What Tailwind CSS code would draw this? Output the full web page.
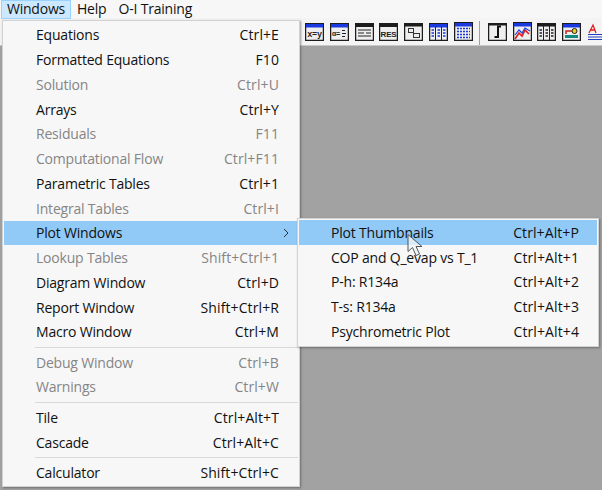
<!DOCTYPE html>
<html lang="en">
<head>
  <meta charset="UTF-8" />
  <title>Windows menu</title>
  <script src="https://cdn.jsdelivr.net/npm/@tailwindcss/browser@4"></script>
</head>
<body class="w-[602px] h-[490px] overflow-hidden relative bg-[#a2a2a2] font-['Open_Sans',sans-serif] text-[14px] tracking-[-0.2px] text-[#111]">

  <!-- Menu bar -->
  <div class="h-[18px] bg-[#f7f7f8] flex items-center">
    <div class="ml-[1px] w-[70px] h-[19px] pb-[2px] bg-[#cce8ff] border border-[#99d1ff] flex items-center justify-center">Windows</div>
    <div class="ml-[6px] pb-[2px]">Help</div>
    <div class="ml-[12px] pb-[2px]">O-I Training</div>
  </div>

  <!-- Toolbar -->
  <div class="h-[28px] bg-[#f4f4f4] border-b border-[#c8c8c8] pl-[305px] pt-[5px] flex gap-[5.800px] items-start">
    <svg class="w-[19px] h-[18px]" viewBox="0 0 19 18"><rect x=".6" y=".6" width="17.800" height="16.800" fill="#eee" stroke="#1c1c1c" stroke-width="1.300"/><rect x="1" y="1" width="17" height="3.500" fill="#1a3ae0"/><text x="9.500" y="13.500" font-size="8.500" font-weight="700" text-anchor="middle" fill="#222" font-family="Liberation Mono">x=y</text></svg>
    <svg class="w-[19px] h-[18px]" viewBox="0 0 19 18"><rect x=".6" y=".6" width="17.800" height="16.800" fill="#eee" stroke="#1c1c1c" stroke-width="1.300"/><rect x="1" y="1" width="17" height="3.500" fill="#1a3ae0"/><text x="6" y="12.500" font-size="7" font-weight="700" text-anchor="middle" fill="#222" font-family="Liberation Mono">α=</text><path d="M12 7.500h3M12 10.500h4M12 13.500h3" stroke="#222" stroke-width="1.200"/></svg>
    <svg class="w-[19px] h-[18px]" viewBox="0 0 19 18"><rect x=".6" y=".6" width="17.800" height="16.800" fill="#eee" stroke="#1c1c1c" stroke-width="1.300"/><rect x="1" y="1" width="17" height="3" fill="#1c1c1c"/><path d="M3 7h13M3 10h6M11 10h5M3 13h13" stroke="#222" stroke-width="1.200"/></svg>
    <svg class="w-[19px] h-[18px]" viewBox="0 0 19 18"><rect x=".6" y=".6" width="17.800" height="16.800" fill="#eee" stroke="#1c1c1c" stroke-width="1.300"/><rect x="1" y="1" width="17" height="3" fill="#1c1c1c"/><text x="9.500" y="13.500" font-size="8" font-weight="700" text-anchor="middle" fill="#222" font-family="Liberation Sans">RES</text></svg>
    <svg class="w-[19px] h-[18px]" viewBox="0 0 19 18"><rect x=".6" y=".6" width="17.800" height="16.800" fill="#eee" stroke="#1c1c1c" stroke-width="1.300"/><rect x="1" y="1" width="17" height="2.500" fill="#1c1c1c"/><rect x="4.500" y="5.500" width="5" height="4" fill="none" stroke="#333"/><rect x="9.500" y="10.500" width="6" height="4" fill="none" stroke="#333"/></svg>
    <svg class="w-[19px] h-[18px]" viewBox="0 0 19 18"><rect x=".6" y=".6" width="17.800" height="16.800" fill="#eee" stroke="#1c1c1c" stroke-width="1.300"/><rect x="1" y="1" width="17" height="3.500" fill="#1a3ae0"/><path d="M6.500 4v13M12.500 4v13" stroke="#222"/><path d="M2.500 7h2.500M2.500 10h2.500M2.500 13h2.500M8.500 7h2.500M8.500 10h2.500M8.500 13h2.500M14 7h2.500M14 10h2.500M14 13h2.500" stroke="#1a3ae0" stroke-width="1.700"/></svg>
    <svg class="w-[19px] h-[19px] -mt-px" viewBox="0 0 19 19"><rect x=".6" y=".6" width="17.800" height="17.800" fill="#eee" stroke="#1c1c1c" stroke-width="1.300"/><rect x="1" y="1" width="17" height="3.500" fill="#1a3ae0"/><path d="M3 6.500h13M3 9.500h13M3 12.500h13M3 15.500h13" stroke="#1a3ae0" stroke-width="1.500" stroke-dasharray="2 1"/></svg>
    <div class="w-px h-[24px] -mt-[2px] mr-[2.400px] bg-[#a0a0a0]"></div>
    <svg class="w-[19px] h-[18px]" viewBox="0 0 19 18"><rect x=".6" y=".6" width="17.800" height="16.800" fill="#eee" stroke="#1c1c1c" stroke-width="1.300"/><path d="M13 3.500h-3v10.500H6.500" fill="none" stroke="#111" stroke-width="2"/><rect x="1" y="1" width="17" height="1.500" fill="#1c1c1c"/></svg>
    <svg class="w-[19px] h-[19px] -mt-px" viewBox="0 0 19 19"><rect x=".6" y=".6" width="17.800" height="17.800" fill="#eee" stroke="#1c1c1c" stroke-width="1.300"/><rect x="1" y="1" width="17" height="3.500" fill="#1a3ae0"/><path d="M2 17l4-6 3 3 3-6 4 4" fill="none" stroke="#e02020" stroke-width="1.700"/><path d="M2 13l4-5 3 3 3-5 5 3" fill="none" stroke="#2040e0" stroke-width="1.200"/></svg>
    <svg class="w-[19px] h-[18px]" viewBox="0 0 19 18"><rect x=".6" y=".6" width="17.800" height="16.800" fill="#eee" stroke="#1c1c1c" stroke-width="1.300"/><rect x="1" y="1" width="17" height="2.500" fill="#1c1c1c"/><path d="M6.500 3v14M12.500 3v14" stroke="#222"/><path d="M2.500 7h2.500M2.500 10h2.500M2.500 13h2.500M8.500 7h2.500M8.500 10h2.500M8.500 13h2.500M14 7h2.500M14 10h2.500M14 13h2.500" stroke="#222" stroke-width="1.700"/></svg>
    <svg class="w-[19px] h-[18px]" viewBox="0 0 19 18"><rect x=".6" y=".6" width="17.800" height="16.800" fill="#eee" stroke="#1c1c1c" stroke-width="1.300"/><rect x="1" y="1" width="17" height="3.500" fill="#1a3ae0"/><rect x="3" y="12" width="13" height="3" fill="#108a80"/><circle cx="12.500" cy="8" r="2.500" fill="#e8d020" stroke="#222"/><path d="M4 11V8h6" fill="none" stroke="#c02020" stroke-width="1.500"/></svg>
    <svg class="w-[15px] h-[18px]" viewBox="0 0 15 18"><path d="M2 10L6 2l3 8M3.500 7h4" fill="none" stroke="#e02020" stroke-width="1.300"/><path d="M1 11.500h14M1 14h14M1 16.500h14" stroke="#2040c0"/></svg>
  </div>

  <!-- Windows dropdown -->
  <div class="absolute left-[2px] top-[20px] w-[298px] h-[467px] bg-[#f7f7f8] border border-[#d2d2d2] pt-[1.500px] pr-[20px] pl-[33px] shadow-[1px_1px_2px_rgba(60,60,60,0.5)]">
    <div class="h-[24.750px] flex items-center justify-between"><span>Equations</span><span class="tracking-[0.1px]">Ctrl+E</span></div>
    <div class="h-[24.750px] flex items-center justify-between"><span>Formatted Equations</span><span class="tracking-[0.1px]">F10</span></div>
    <div class="h-[24.750px] flex items-center justify-between text-[#858585]"><span>Solution</span><span class="tracking-[0.1px]">Ctrl+U</span></div>
    <div class="h-[24.750px] flex items-center justify-between"><span>Arrays</span><span class="tracking-[0.1px]">Ctrl+Y</span></div>
    <div class="h-[24.750px] flex items-center justify-between text-[#858585]"><span>Residuals</span><span class="tracking-[0.1px]">F11</span></div>
    <div class="h-[24.750px] flex items-center justify-between text-[#858585]"><span>Computational Flow</span><span class="tracking-[0.1px]">Ctrl+F11</span></div>
    <div class="h-[24.750px] flex items-center justify-between"><span>Parametric Tables</span><span class="tracking-[0.1px]">Ctrl+1</span></div>
    <div class="h-[24.750px] flex items-center justify-between text-[#858585]"><span>Integral Tables</span><span class="tracking-[0.1px]">Ctrl+I</span></div>
    <div class="h-[24.750px] -ml-[32px] -mr-[19px] pl-[32px] pr-[9px] bg-[#91c9f7] flex items-center justify-between"><span>Plot Windows</span>
      <svg class="w-[6px] h-[10px]" viewBox="0 0 6 10"><path d="M1 1l4 4-4 4" fill="none" stroke="#333" stroke-width="1"/></svg>
    </div>
    <div class="h-[24.750px] flex items-center justify-between text-[#858585]"><span>Lookup Tables</span><span class="tracking-[0.1px]">Shift+Ctrl+1</span></div>
    <div class="h-[24.750px] flex items-center justify-between"><span>Diagram Window</span><span class="tracking-[0.1px]">Ctrl+D</span></div>
    <div class="h-[24.750px] flex items-center justify-between"><span>Report Window</span><span class="tracking-[0.1px]">Shift+Ctrl+R</span></div>
    <div class="h-[24.750px] flex items-center justify-between"><span>Macro Window</span><span class="tracking-[0.1px]">Ctrl+M</span></div>
    <div class="h-[5.500px] -mr-[19px] flex items-center -ml-[1px]"><div class="w-full h-px bg-[#d8d8d8]"></div></div>
    <div class="h-[24.750px] flex items-center justify-between text-[#858585]"><span>Debug Window</span><span class="tracking-[0.1px]">Ctrl+B</span></div>
    <div class="h-[24.750px] flex items-center justify-between text-[#858585]"><span>Warnings</span><span class="tracking-[0.1px]">Ctrl+W</span></div>
    <div class="h-[6px] -mr-[19px] flex items-center -ml-[1px]"><div class="w-full h-px bg-[#d8d8d8]"></div></div>
    <div class="h-[24.750px] flex items-center justify-between"><span>Tile</span><span class="tracking-[0.1px]">Ctrl+Alt+T</span></div>
    <div class="h-[24.750px] flex items-center justify-between"><span>Cascade</span><span class="tracking-[0.1px]">Ctrl+Alt+C</span></div>
    <div class="h-[5px] -mr-[19px] flex items-center -ml-[1px]"><div class="w-full h-px bg-[#d8d8d8]"></div></div>
    <div class="h-[24.750px] flex items-center justify-between"><span>Calculator</span><span class="tracking-[0.1px]">Shift+Ctrl+C</span></div>
  </div>

  <!-- Plot Windows submenu -->
  <div class="absolute left-[297px] top-[218px] w-[302px] h-[129px] bg-[#f7f7f8] border border-[#d2d2d2] p-px shadow-[1px_1px_2px_rgba(60,60,60,0.5)]">
    <div class="h-[24.750px] pl-[32px] pr-[18px] bg-[#91c9f7] flex items-center justify-between"><span>Plot Thumbnails</span><span class="tracking-[0.1px]">Ctrl+Alt+P</span></div>
    <div class="h-[24.750px] pl-[32px] pr-[18px] flex items-center justify-between"><span>COP and Q_evap vs T_1</span><span class="tracking-[0.1px]">Ctrl+Alt+1</span></div>
    <div class="h-[24.750px] pl-[32px] pr-[18px] flex items-center justify-between"><span>P-h: R134a</span><span class="tracking-[0.1px]">Ctrl+Alt+2</span></div>
    <div class="h-[24.750px] pl-[32px] pr-[18px] flex items-center justify-between"><span>T-s: R134a</span><span class="tracking-[0.1px]">Ctrl+Alt+3</span></div>
    <div class="h-[24.750px] pl-[32px] pr-[18px] flex items-center justify-between"><span>Psychrometric Plot</span><span class="tracking-[0.1px]">Ctrl+Alt+4</span></div>
  </div>

  <!-- Mouse pointer -->
  <svg class="absolute left-[406px] top-[233px] w-[18px] h-[25px]" viewBox="0 0 18 25"><path d="M2 1.500v17l4.500-4 3.500 8 3.500-1.500-3.500-7.500h6z" fill="#f2f6fa" fill-opacity=".75" stroke="#555" stroke-width="1"/></svg>
</body>
</html>
